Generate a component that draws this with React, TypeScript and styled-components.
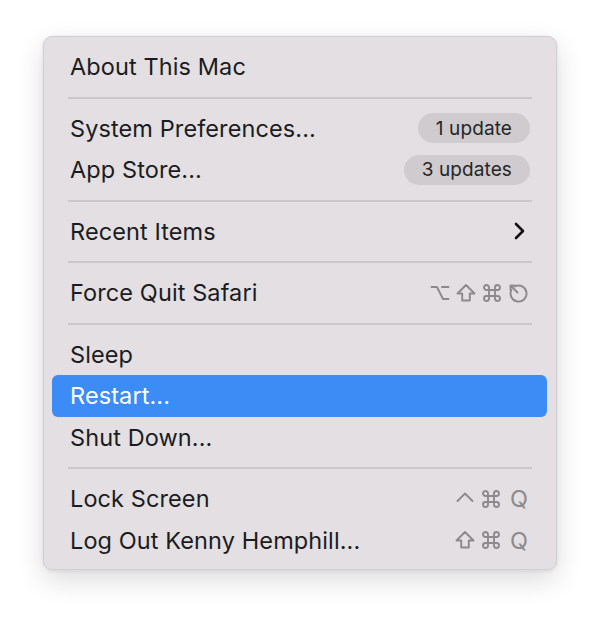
import React from "react";
import styled, { createGlobalStyle } from "styled-components";

const Global = createGlobalStyle`
  html, body { margin: 0; padding: 0; background: #ffffff; }
  body { font-family: Inter, "Noto Sans", "Liberation Sans", sans-serif; -webkit-font-smoothing: antialiased; }
`;

const Page = styled.div`
  width: 600px;
  height: 621px;
  padding: 36px 0 0 43px;
  box-sizing: border-box;
`;

const Menu = styled.div`
  width: 514px;
  box-sizing: border-box;
  background: #e3dfe2;
  border: 1px solid #d2ced1;
  border-radius: 9px;
  padding: 9px 9px 8px 8px;
  box-shadow: 0 10px 28px rgba(0, 0, 0, 0.14), 0 1px 4px rgba(0, 0, 0, 0.08);
`;

const Item = styled.div<{ $active?: boolean }>`
  height: 41.5px;
  display: flex;
  align-items: center;
  justify-content: space-between;
  padding: 0 19px 0 18px;
  border-radius: 6px;
  background: ${(p) => (p.$active ? "#3d8cf6" : "transparent")};
  color: ${(p) => (p.$active ? "#ffffff" : "#1c1c1e")};
  font-size: 23.5px;
  letter-spacing: 0.1px;
`;

const Label = styled.span``;

const Separator = styled.div`
  height: 2px;
  margin: 9px 15px 9px 16px;
  background: #cbc7ca;
`;

const Badge = styled.span`
  height: 30px;
  display: inline-flex;
  align-items: center;
  padding: 0 18px;
  margin-right: -2px;
  border-radius: 15px;
  background: #cfcbce;
  color: #262626;
  font-size: 19px;
`;

const Shortcut = styled.span`
  display: inline-flex;
  align-items: center;
  gap: 6px;
  color: #8d8a8d;
`;

const KeyLetter = styled.span`
  font-size: 23.5px;
  line-height: 1;
  color: #8d8a8d;
  margin-left: 3px;
`;

const Icon = styled.svg`
  width: 20px;
  height: 20px;
  display: block;
  fill: none;
  stroke: #8d8a8d;
  stroke-width: 1.9;
  stroke-linecap: round;
  stroke-linejoin: round;
`;

const Option = () => (
  <Icon viewBox="0 0 20 20">
    <path d="M1.5 4 H7 L13 16 H18.5 M12 4 H18.5" />
  </Icon>
);

const Shift = () => (
  <Icon viewBox="0 0 20 20">
    <path d="M10 2 L18.5 10.5 H13.8 V17.5 H6.2 V10.5 H1.5 Z" />
  </Icon>
);

const Command = () => (
  <Icon viewBox="0 0 20 20">
    <path d="M7 7 H13 V13 H7 Z M7 7 V4.5 A2.5 2.5 0 1 0 4.5 7 H7 M13 7 V4.5 A2.5 2.5 0 1 1 15.5 7 H13 M7 13 V15.5 A2.5 2.5 0 1 1 4.5 13 H7 M13 13 V15.5 A2.5 2.5 0 1 0 15.5 13 H13" />
  </Icon>
);

const Escape = () => (
  <Icon viewBox="0 0 20 20">
    <path d="M3.4 7 A8 8 0 1 0 7 3.4" />
    <path d="M2.5 2.5 L9.5 9.5 M2.5 2.5 V7 M2.5 2.5 H7" />
  </Icon>
);

const Control = () => (
  <Icon viewBox="0 0 20 20">
    <path d="M2.5 12 L10 4.5 L17.5 12" />
  </Icon>
);

const Chevron = styled.svg`
  width: 12px;
  height: 18px;
  display: block;
  fill: none;
  stroke: #111111;
  stroke-width: 2.6;
  stroke-linecap: round;
  stroke-linejoin: round;
  margin-right: 3px;
`;

export default function App() {
  return (
    <>
      <Global />
      <Page>
        <Menu>
          <Item>
            <Label>About This Mac</Label>
          </Item>
          <Separator />
          <Item>
            <Label>System Preferences...</Label>
            <Badge>1 update</Badge>
          </Item>
          <Item>
            <Label>App Store...</Label>
            <Badge>3 updates</Badge>
          </Item>
          <Separator />
          <Item>
            <Label>Recent Items</Label>
            <Chevron viewBox="0 0 12 18">
              <path d="M3 2 L10 9 L3 16" />
            </Chevron>
          </Item>
          <Separator />
          <Item>
            <Label>Force Quit Safari</Label>
            <Shortcut>
              <Option />
              <Shift />
              <Command />
              <Escape />
            </Shortcut>
          </Item>
          <Separator />
          <Item>
            <Label>Sleep</Label>
          </Item>
          <Item $active>
            <Label>Restart...</Label>
          </Item>
          <Item>
            <Label>Shut Down...</Label>
          </Item>
          <Separator />
          <Item>
            <Label>Lock Screen</Label>
            <Shortcut>
              <Control />
              <Command />
              <KeyLetter>Q</KeyLetter>
            </Shortcut>
          </Item>
          <Item>
            <Label>Log Out Kenny Hemphill...</Label>
            <Shortcut>
              <Shift />
              <Command />
              <KeyLetter>Q</KeyLetter>
            </Shortcut>
          </Item>
        </Menu>
      </Page>
    </>
  );
}
